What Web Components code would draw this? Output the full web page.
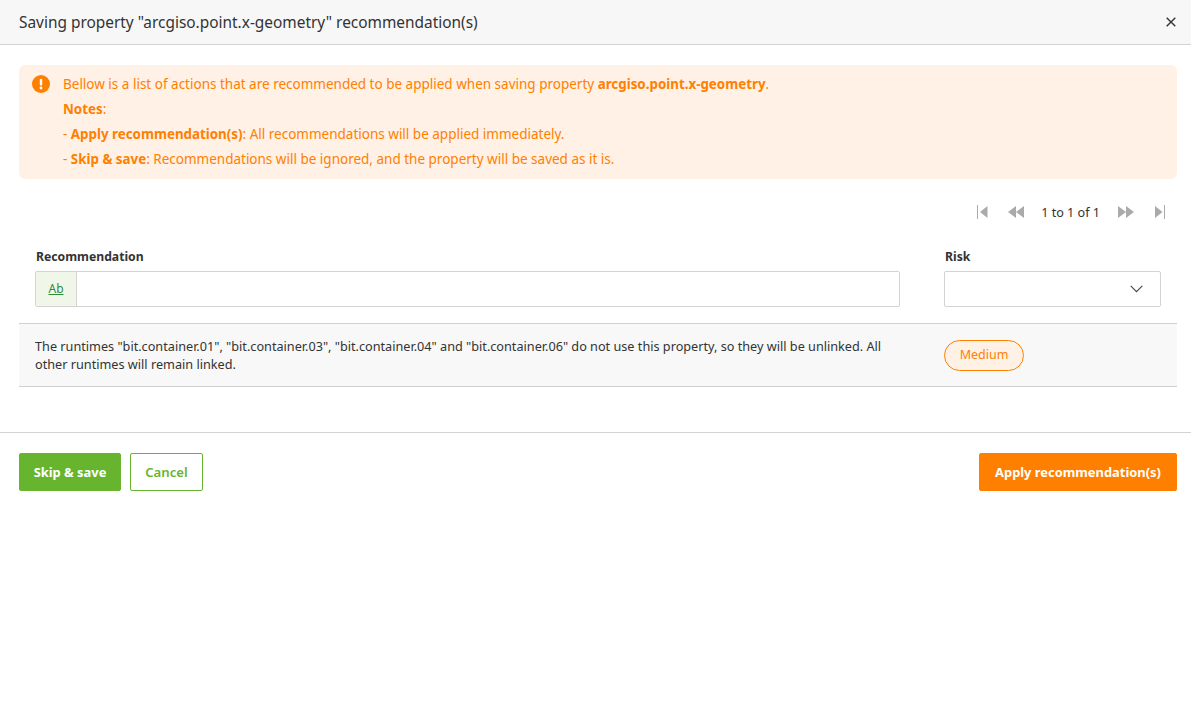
<!DOCTYPE html>
<html><head><meta charset="utf-8"><style>
html,body{margin:0;padding:0;background:#fff;}
body{font-family:"Noto Sans","Open Sans",sans-serif;font-size:13px;color:#333;width:1191px;height:725px;overflow:hidden}
</style></head><body>
<x-dialog></x-dialog>
<script>
function el(name,html){customElements.define(name,class extends HTMLElement{constructor(){super();this.attachShadow({mode:"open"}).innerHTML=html;}});}
el("x-header",`<style>:host{display:flex;align-items:center;justify-content:space-between;height:44px;background:#f7f7f7;border-bottom:1px solid #d3d3d3;padding:0 15px 0 19px;font-size:15.42px;color:#333}
svg{display:block}</style><slot></slot><svg width="10" height="10" viewBox="0 0 10 10"><path d="M.7.7l8.6 8.6M9.300.7L.7 9.300" stroke="#333" stroke-width="1.400" fill="none"/></svg>`);
el("x-alert",`<style>:host{display:flex;gap:13px;background:#fff1e6;border-radius:6px;padding:7px 12px 7px 13px;color:#ff7f00;font-size:13.5px;line-height:25px}
svg{flex:none;margin-top:3px}</style><svg width="18" height="18" viewBox="0 0 18 18"><circle cx="9" cy="9" r="9" fill="#ff7f00"/><rect x="7.800" y="3.800" width="2.400" height="6.800" rx="1" fill="#fff"/><circle cx="9" cy="13" r="1.400" fill="#fff"/></svg><div><slot></slot></div>`);
el("x-pager",`<style>:host{display:flex;justify-content:flex-end;align-items:center;height:26px;color:#333;font-size:12.6px;margin:20px 10px 0 0}
svg{display:block;flex:none}.t{margin:0 18px 0 17px}.s{width:19px}.s2{width:21px}</style>
<svg width="12" height="14" viewBox="0 0 12 14"><path d="M.5 0v14" stroke="#aaa"/><path d="M10.500 1v12L3 7z" fill="#aaa"/></svg><span class="s"></span>
<svg width="16" height="14" viewBox="0 0 16 14"><path d="M8 1v12L0 7zM16 1v12L8 7z" fill="#aaa"/></svg>
<span class="t">1 to 1 of 1</span>
<svg width="16" height="14" viewBox="0 0 16 14"><path d="M0 1v12L8 7zM8 1v12L16 7z" fill="#aaa"/></svg><span class="s2"></span>
<svg width="12" height="14" viewBox="0 0 12 14"><path d="M0 1v12L7.500 7z" fill="#aaa"/><path d="M9.500 0v14" stroke="#aaa"/></svg>`);
el("x-filter-head",`<style>:host{display:grid;grid-template-columns:865px 217px;column-gap:44px;padding-left:16px;margin-top:23px;font-size:12.2px}
label{display:block;font-weight:700;line-height:18px;margin:0 0 5px 1px;color:#333}
.box{box-sizing:border-box;height:36px;border:1px solid #d3d3d3;border-radius:2px;background:#fff;display:flex;align-items:stretch}
.ab{width:41px;background:#f0f7e9;border-right:1px solid #d3d3d3;display:flex;align-items:center;justify-content:center;color:#2e8b3a;text-decoration:underline;font-size:12px;padding-bottom:2px;box-sizing:border-box}
.sel{justify-content:flex-end;align-items:center;padding-right:17px}</style>
<div><label>Recommendation</label><div class="box"><span class="ab">Ab</span></div></div>
<div><label>Risk</label><div class="box sel"><svg width="13" height="8" viewBox="0 0 13 8"><path d="M.7.9l5.800 5.800L12.300.9" stroke="#444" stroke-width="1.100" fill="none"/></svg></div></div>`);
el("x-row",`<style>:host{display:grid;grid-template-columns:909px 1fr;align-items:center;box-sizing:border-box;height:64px;margin-top:16px;background:#f8f8f8;border-top:1px solid #d0d0d0;border-bottom:1px solid #d0d0d0;padding-left:16px;font-size:12.68px;line-height:18px;color:#333}
.t{width:860px}</style><div class="t"><slot></slot></div><div style="display:flex"><slot name="risk"></slot></div>`);
el("x-badge",`<style>:host{display:inline-flex;align-items:center;justify-content:center;box-sizing:border-box;width:80px;height:31px;border:1px solid #ff7f00;border-radius:16px;background:#fff1e6;color:#ff7f00;font-size:12.5px}</style><slot></slot>`);
el("x-btn",`<style>:host{display:inline-flex;align-items:center;justify-content:center;box-sizing:border-box;height:38px;width:var(--w);border-radius:2px;font-size:12.9px;font-weight:700;background:var(--b);border:1px solid var(--b);color:#fff}
:host([outline]){background:#fff;color:var(--b);font-weight:600;font-size:13.2px}</style><slot></slot>`);
el("x-footer",`<style>:host{display:flex;align-items:center;border-top:1px solid #d3d3d3;margin-top:45px;padding:20px 14px 0 19px;gap:9px}.sp{flex:1}</style><slot></slot><span class="sp"></span><slot name="end"></slot>`);
el("x-body",`<style>:host{display:block;padding:20px 14px 0 19px}</style><slot></slot>`);
el("x-dialog",`<style>:host{display:block}b{font-weight:700;font-size:13.35px}</style>
<x-header>Saving property "arcgiso.point.x-geometry" recommendation(s)</x-header>
<x-body>
<x-alert>Bellow is a list of actions that are recommended to be applied when saving property <b>arcgiso.point.x-geometry</b>.<br><b>Notes</b>:<br>- <b>Apply recommendation(s)</b>: All recommendations will be applied immediately.<br>- <b>Skip &amp; save</b>: Recommendations will be ignored, and the property will be saved as it is.</x-alert>
<x-pager></x-pager>
<x-filter-head></x-filter-head>
<x-row>The runtimes "bit.container.01", "bit.container.03", "bit.container.04" and "bit.container.06" do not use this property, so they will be unlinked. All other runtimes will remain linked.<x-badge slot="risk">Medium</x-badge></x-row>
</x-body>
<x-footer><x-btn style="--b:#67b52f;--w:102px">Skip &amp; save</x-btn><x-btn outline style="--b:#67b52f;--w:73px">Cancel</x-btn><x-btn slot="end" style="--b:#ff7f00;--w:198px">Apply recommendation(s)</x-btn></x-footer>`);
</script>
</body></html>
